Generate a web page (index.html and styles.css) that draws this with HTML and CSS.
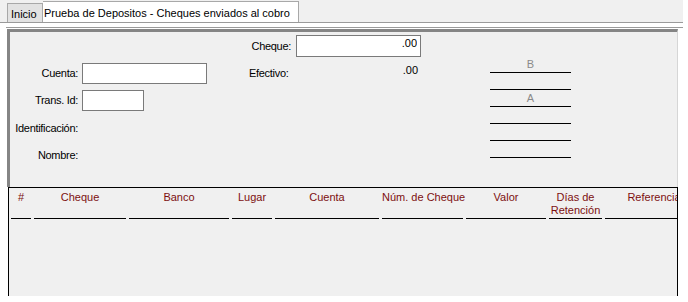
FILE: index.html
```html
<!DOCTYPE html>
<html lang="es">
<head>
<meta charset="utf-8">
<title>Prueba de Depositos - Cheques enviados al cobro</title>
<link rel="stylesheet" href="styles.css">
</head>
<body>
<div class="app">
  <div class="tabbar">
    <div class="tab tab-inicio">Inicio</div>
    <div class="tab tab-active">Prueba de Depositos - Cheques enviados al cobro</div>
  </div>
  <div class="sep"></div>
  <div class="panel">
    <div class="col col-left">
      <div class="row row-cuenta"><span class="lbl">Cuenta:</span><input class="field field-wide" type="text" value=""></div>
      <div class="row row-trans"><span class="lbl">Trans. Id:</span><input class="field field-short" type="text" value=""></div>
      <div class="row row-ident"><span class="lbl">Identificación:</span></div>
      <div class="row row-nombre"><span class="lbl">Nombre:</span></div>
    </div>
    <div class="col col-mid">
      <div class="row row-cheque"><span class="lbl2 lbl2-right">Cheque:</span><input class="field field-amount" type="text" value=".00"></div>
      <div class="row row-efectivo"><span class="lbl2">Efectivo:</span><span class="amount">.00</span></div>
    </div>
    <div class="col col-sign">
      <div class="sig">B</div>
      <div class="sig"></div>
      <div class="sig">A</div>
      <div class="sig"></div>
      <div class="sig"></div>
      <div class="sig"></div>
    </div>
  </div>
  <div class="grid">
    <div class="grid-head">
      <div class="th w-num">#</div>
      <div class="th w-cheque">Cheque</div>
      <div class="th w-banco">Banco</div>
      <div class="th w-lugar">Lugar</div>
      <div class="th w-cuenta">Cuenta</div>
      <div class="th w-numch">Núm. de Cheque</div>
      <div class="th w-valor">Valor</div>
      <div class="th w-dias">Días de<br>Retención</div>
      <div class="th w-ref">Referencia</div>
    </div>
  </div>
</div>
</body>
</html>
```
FILE: styles.css
```css
* { box-sizing: border-box; }
html, body { margin: 0; padding: 0; background: #ffffff; }
body {
  font-family: "Liberation Sans", Arial, sans-serif;
  font-size: 11px;
  line-height: 13px;
  color: #000;
}
.app { width: 683px; }

.tabbar {
  height: 23px;
  background: #f0f0f0;
  border-bottom: 1px solid #9a9a9a;
  padding-left: 7px;
  display: flex;
  align-items: flex-end;
}
.tab {
  border: 1px solid #a8a8a8;
  border-bottom: none;
  white-space: nowrap;
}
.tab-inicio {
  width: 36px;
  height: 19px;
  background: #e2e2e2;
  padding: 4px 0 0 3px;
}
.tab-active {
  width: 256px;
  height: 21px;
  background: #ffffff;
  border-left: none;
  padding: 5px 0 0 1px;
}

.sep {
  height: 5px;
  margin-left: 6px;
  border-bottom: 1px solid #9a9a9a;
}
.panel {
  margin-top: 1px;
  margin-left: 7px;
  width: 671px;
  height: 158px;
  background: #f0f0f0;
  border-top: 3px solid #858585;
  border-left: 3px solid #858585;
  border-right: 1px solid #d6d6d6;
  display: flex;
  align-items: flex-start;
}
.col { display: flex; flex-direction: column; }
.row { display: flex; align-items: center; }

.col-left { width: 196px; }
.lbl {
  width: 68px;
  margin-right: 4px;
  text-align: right;
  letter-spacing: -0.3px;
  white-space: nowrap;
  flex: none;
}
.row-cuenta { margin-top: 31px; height: 21px; }
.row-trans { margin-top: 6px; height: 21px; }
.row-ident { margin-top: 10px; height: 14px; }
.row-nombre { margin-top: 13px; height: 14px; }

.field {
  height: 21px;
  border: 1px solid #7a7a7a;
  background: #ffffff;
  font: inherit;
  padding: 0 3px;
  margin: 0;
  outline: none;
}
.field-wide { width: 125px; }
.field-short { width: 62px; }
.field-amount {
  width: 125px;
  height: 22px;
  text-align: right;
  padding: 1px 3px 8px 3px;
}

.col-mid { width: 172px; margin-left: 43px; }
.lbl2 {
  width: 43px;
  margin-right: 4px;
  letter-spacing: -0.3px;
  white-space: nowrap;
  flex: none;
}
.lbl2-right { text-align: right; padding-right: 1px; }
.row-cheque { margin-top: 3px; height: 22px; }
.row-efectivo { margin-top: 7px; height: 16px; align-items: flex-start; }
.row-efectivo .lbl2 { padding-top: 3px; }
.amount { width: 125px; text-align: right; padding-right: 3px; }

.col-sign { width: 81px; margin-left: 69px; margin-top: 24px; }
.sig {
  height: 17px;
  border-bottom: 1px solid #000;
  text-align: center;
  color: #8a8a8a;
  padding-top: 2px;
}

.grid {
  margin-left: 8px;
  width: 670px;
  height: 109px;
  border: 1px solid #000;
  border-bottom: none;
  background: #f0f0f0;
  overflow: hidden;
}
.grid-head {
  display: flex;
  gap: 3px;
  padding-left: 2px;
  padding-top: 3px;
  align-items: flex-start;
}
.th {
  flex: none;
  height: 28px;
  border-bottom: 1px solid #000;
  text-align: center;
  color: #7d0f0f;
  white-space: nowrap;
}
.w-num { width: 20px; }
.w-cheque { width: 92px; }
.w-banco { width: 100px; }
.w-lugar { width: 40px; }
.w-cuenta { width: 104px; }
.w-numch { width: 81px; }
.w-valor { width: 80px; }
.w-dias { width: 53px; }
.w-ref { width: 98px; }
```
